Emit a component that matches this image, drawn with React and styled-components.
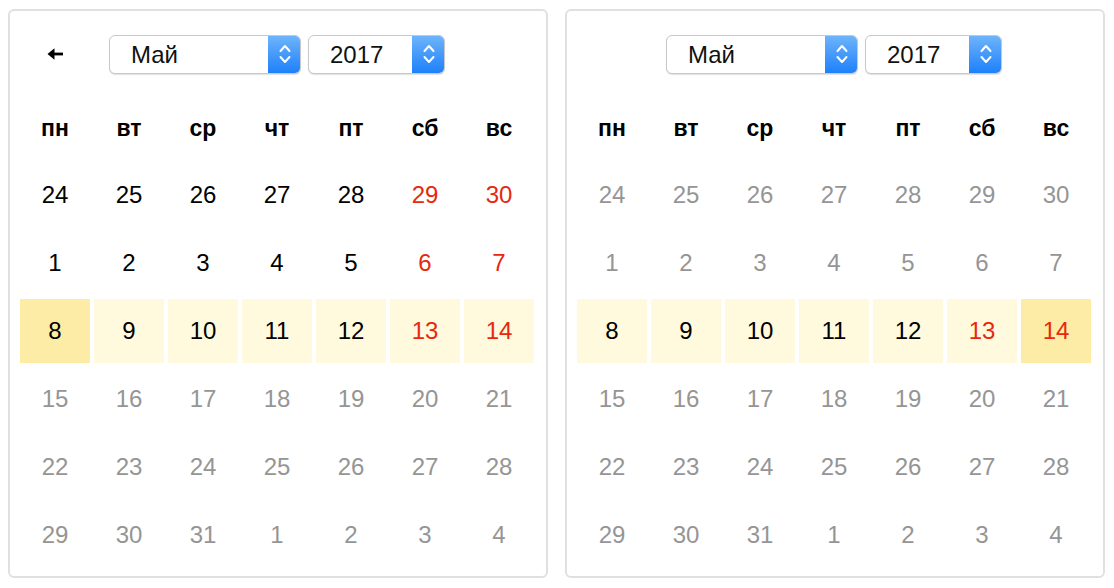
import React from "react";
import styled, { createGlobalStyle } from "styled-components";

const Global = createGlobalStyle`
  html, body { margin: 0; padding: 0; background: #fff; }
  body { font-family: "Liberation Sans", Arial, sans-serif; }
`;

const Page = styled.div`
  display: flex;
  gap: 17px;
  padding: 9px 8px 0 8px;
`;

const Panel = styled.div`
  width: 540px;
  height: 569px;
  box-sizing: border-box;
  border: 2px solid #e0e0e0;
  border-radius: 6px;
  padding: 23px 12px 0 10px;
  display: flex;
  flex-direction: column;
`;

const Header = styled.div`
  display: grid;
  grid-template-columns: 1fr auto 1fr;
  align-items: center;
  height: 40px;
  margin-bottom: 21px;
`;

const BackButton = styled.button`
  justify-self: start;
  width: 70px;
  height: 40px;
  border: none;
  background: none;
  padding: 0;
  display: flex;
  align-items: center;
  justify-content: center;
  cursor: pointer;
`;

const Selects = styled.div`
  display: flex;
  gap: 7px;
`;

const Select = styled.div`
  width: ${(p) => p.$w}px;
  height: 39px;
  box-sizing: border-box;
  border: 1px solid #c8c8c8;
  border-radius: 6px;
  background: #fff;
  box-shadow: 0 1px 1px rgba(0, 0, 0, 0.12);
  display: flex;
  align-items: stretch;
  overflow: hidden;
`;

const SelectLabel = styled.div`
  flex: 1;
  display: flex;
  align-items: center;
  padding-left: 21px;
  padding-top: 2px;
  font-size: 24px;
  color: #111;
`;

const Stepper = styled.div`
  width: 33px;
  background: linear-gradient(#6fb5fb, #1c7ffa);
  display: flex;
  align-items: center;
  justify-content: center;
  margin: -1px -1px -1px 0;
  border-radius: 0 6px 6px 0;
`;

const Grid = styled.div`
  display: grid;
  grid-template-columns: repeat(7, 70px);
  grid-auto-rows: 64px;
  gap: 4px;
`;

const WeekDay = styled.div`
  display: flex;
  align-items: center;
  justify-content: center;
  font-size: 23px;
  font-weight: bold;
  color: #000;
  padding-top: 2px;
`;

const Day = styled.div`
  display: flex;
  align-items: center;
  justify-content: center;
  font-size: 24px;
  color: ${(p) => (p.$muted ? "#959595" : p.$red ? "#e8270f" : "#000")};
  background: ${(p) =>
    p.$edge ? "#fdeca5" : p.$range ? "#fff9de" : "transparent"};
`;

const Chevrons = () => (
  <svg width="14" height="26" viewBox="0 0 14 26" fill="none" stroke="#fff" strokeWidth="2" strokeLinecap="round" strokeLinejoin="round">
    <path d="M2.5 10 L7 5 L11.5 10" />
    <path d="M2.5 16 L7 21 L11.5 16" />
  </svg>
);

const ArrowLeft = () => (
  <svg width="17" height="14" viewBox="0 0 17 14">
    <path d="M16 7 H3" stroke="#000" strokeWidth="2.8" />
    <path d="M0.5 7 L7.5 1.2 L7.5 12.8 Z" fill="#000" />
  </svg>
);

const weekDays = ["пн", "вт", "ср", "чт", "пт", "сб", "вс"];
const rows = [
  [24, 25, 26, 27, 28, 29, 30],
  [1, 2, 3, 4, 5, 6, 7],
  [8, 9, 10, 11, 12, 13, 14],
  [15, 16, 17, 18, 19, 20, 21],
  [22, 23, 24, 25, 26, 27, 28],
  [29, 30, 31, 1, 2, 3, 4],
];

function Calendar({ showBack, activeRows, edge }) {
  return (
    <Panel>
      <Header>
        {showBack ? (
          <BackButton aria-label="back">
            <ArrowLeft />
          </BackButton>
        ) : (
          <span />
        )}
        <Selects>
          <Select $w={192}>
            <SelectLabel>Май</SelectLabel>
            <Stepper>
              <Chevrons />
            </Stepper>
          </Select>
          <Select $w={137}>
            <SelectLabel>2017</SelectLabel>
            <Stepper>
              <Chevrons />
            </Stepper>
          </Select>
        </Selects>
        <span />
      </Header>
      <Grid>
        {weekDays.map((d) => (
          <WeekDay key={d}>{d}</WeekDay>
        ))}
        {rows.map((row, ri) =>
          row.map((n, ci) => {
            const active = activeRows.includes(ri);
            const inRange = ri === 2;
            return (
              <Day
                key={ri + "-" + ci}
                $muted={!active}
                $red={active && ci >= 5}
                $range={inRange}
                $edge={inRange && ci === edge}
              >
                {n}
              </Day>
            );
          })
        )}
      </Grid>
    </Panel>
  );
}

export default function App() {
  return (
    <>
      <Global />
      <Page>
        <Calendar showBack activeRows={[0, 1, 2]} edge={0} />
        <Calendar activeRows={[2]} edge={6} />
      </Page>
    </>
  );
}
